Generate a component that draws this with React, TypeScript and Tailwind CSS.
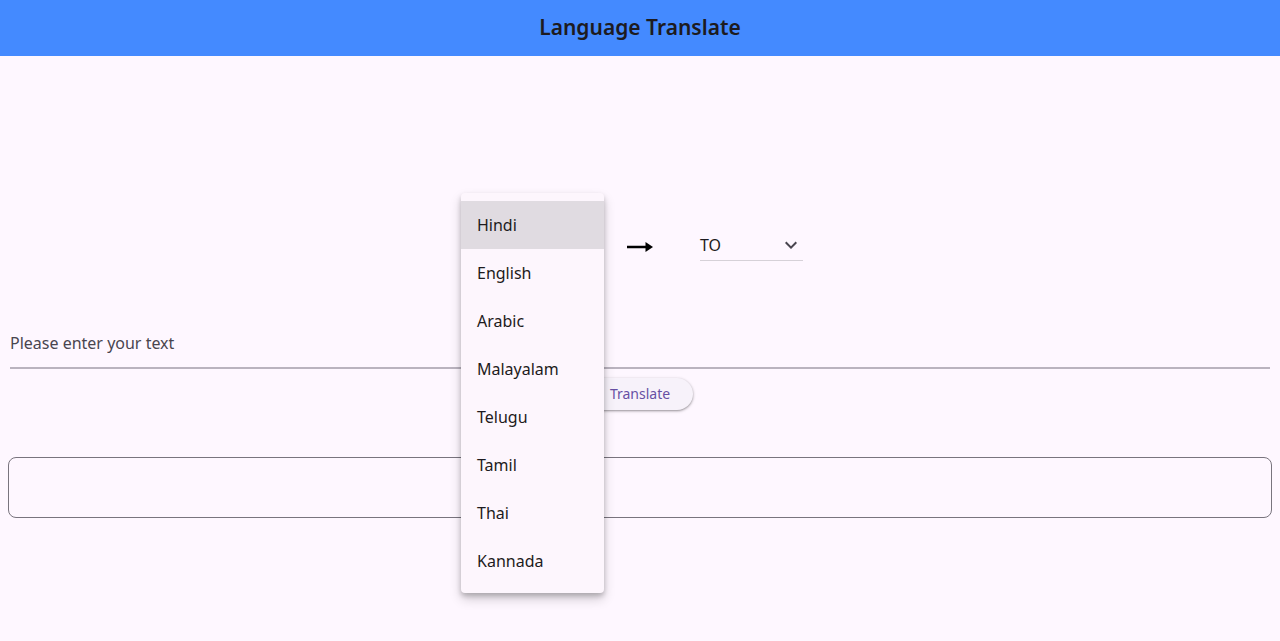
import React, { useState } from 'react';

const languages = ['Hindi', 'English', 'Arabic', 'Malayalam', 'Telugu', 'Tamil', 'Thai', 'Kannada'];

const ChevronDown: React.FC = () => (
  <svg width="24" height="24" viewBox="0 0 24 24" className="text-[#49454f]">
    <path d="M7.41 8.59 12 13.17l4.59-4.58L18 10l-6 6-6-6z" fill="currentColor" />
  </svg>
);

const ArrowRight: React.FC = () => (
  <svg width="28" height="24" viewBox="0 0 28 24">
    <rect x="1" y="10.75" width="20" height="2.5" fill="#000" />
    <path d="M19.5 7 27 12l-7.5 5z" fill="#000" />
  </svg>
);

const App: React.FC = () => {
  const [from] = useState('FROM');
  const [to] = useState('TO');
  const [text, setText] = useState('');

  return (
    <div
      className="relative min-h-[641px] w-full bg-[#fef7ff] text-[#1d1b20]"
      style={{ fontFamily: '"Noto Sans", "Open Sans", sans-serif' }}
    >
      {/* App bar */}
      <header className="flex h-14 items-center justify-center bg-[#448aff]">
        <h1 className="text-[21px] font-semibold text-[#1d1b20]">Language Translate</h1>
      </header>

      {/* Language selectors */}
      <div className="mt-[177px] flex items-center justify-center">
        <div className="flex w-[103px] items-center justify-between border-b border-[#d6d1d8] pb-[3px]">
          <span className="text-base">{from}</span>
          <ChevronDown />
        </div>
        <div className="mx-[40px] flex w-[40px] justify-center">
          <ArrowRight />
        </div>
        <div className="flex w-[103px] items-center justify-between border-b border-[#d6d1d8] pb-[3px]">
          <span className="text-base">{to}</span>
          <ChevronDown />
        </div>
      </div>

      {/* Input */}
      <div className="mt-[70px] px-[10px]">
        <input
          value={text}
          onChange={(e) => setText(e.target.value)}
          placeholder="Please enter your text"
          className="w-full border-b-2 border-[#bab3bf] bg-transparent pb-[12px] text-base text-[#1d1b20] outline-none placeholder:text-[#49454f]"
        />
      </div>

      {/* Translate button */}
      <div className="mt-[9px] flex justify-center">
        <button className="h-8 w-[106px] rounded-full bg-[#f7f2fa] text-sm text-[#6750a4] shadow-[0_1px_2px_rgba(0,0,0,0.3),0_1px_3px_1px_rgba(0,0,0,0.1)]">
          Translate
        </button>
      </div>

      {/* Output */}
      <div className="mt-[47px] px-2">
        <div className="h-[61px] w-full rounded-lg border border-[#79747e]" />
      </div>

      {/* Open dropdown menu */}
      <div className="absolute left-[461px] top-[193px] w-[143px] rounded-[4px] bg-[#fdf6fd] py-2 shadow-[0_3px_5px_rgba(0,0,0,0.2),0_6px_12px_rgba(0,0,0,0.18)]">
        {languages.map((lang, i) => (
          <div
            key={lang}
            className={`flex h-12 items-center px-4 text-base text-[#1d1b20] ${i === 0 ? 'bg-[#e0dbe1]' : ''}`}
          >
            {lang}
          </div>
        ))}
      </div>
    </div>
  );
};

export default App;
